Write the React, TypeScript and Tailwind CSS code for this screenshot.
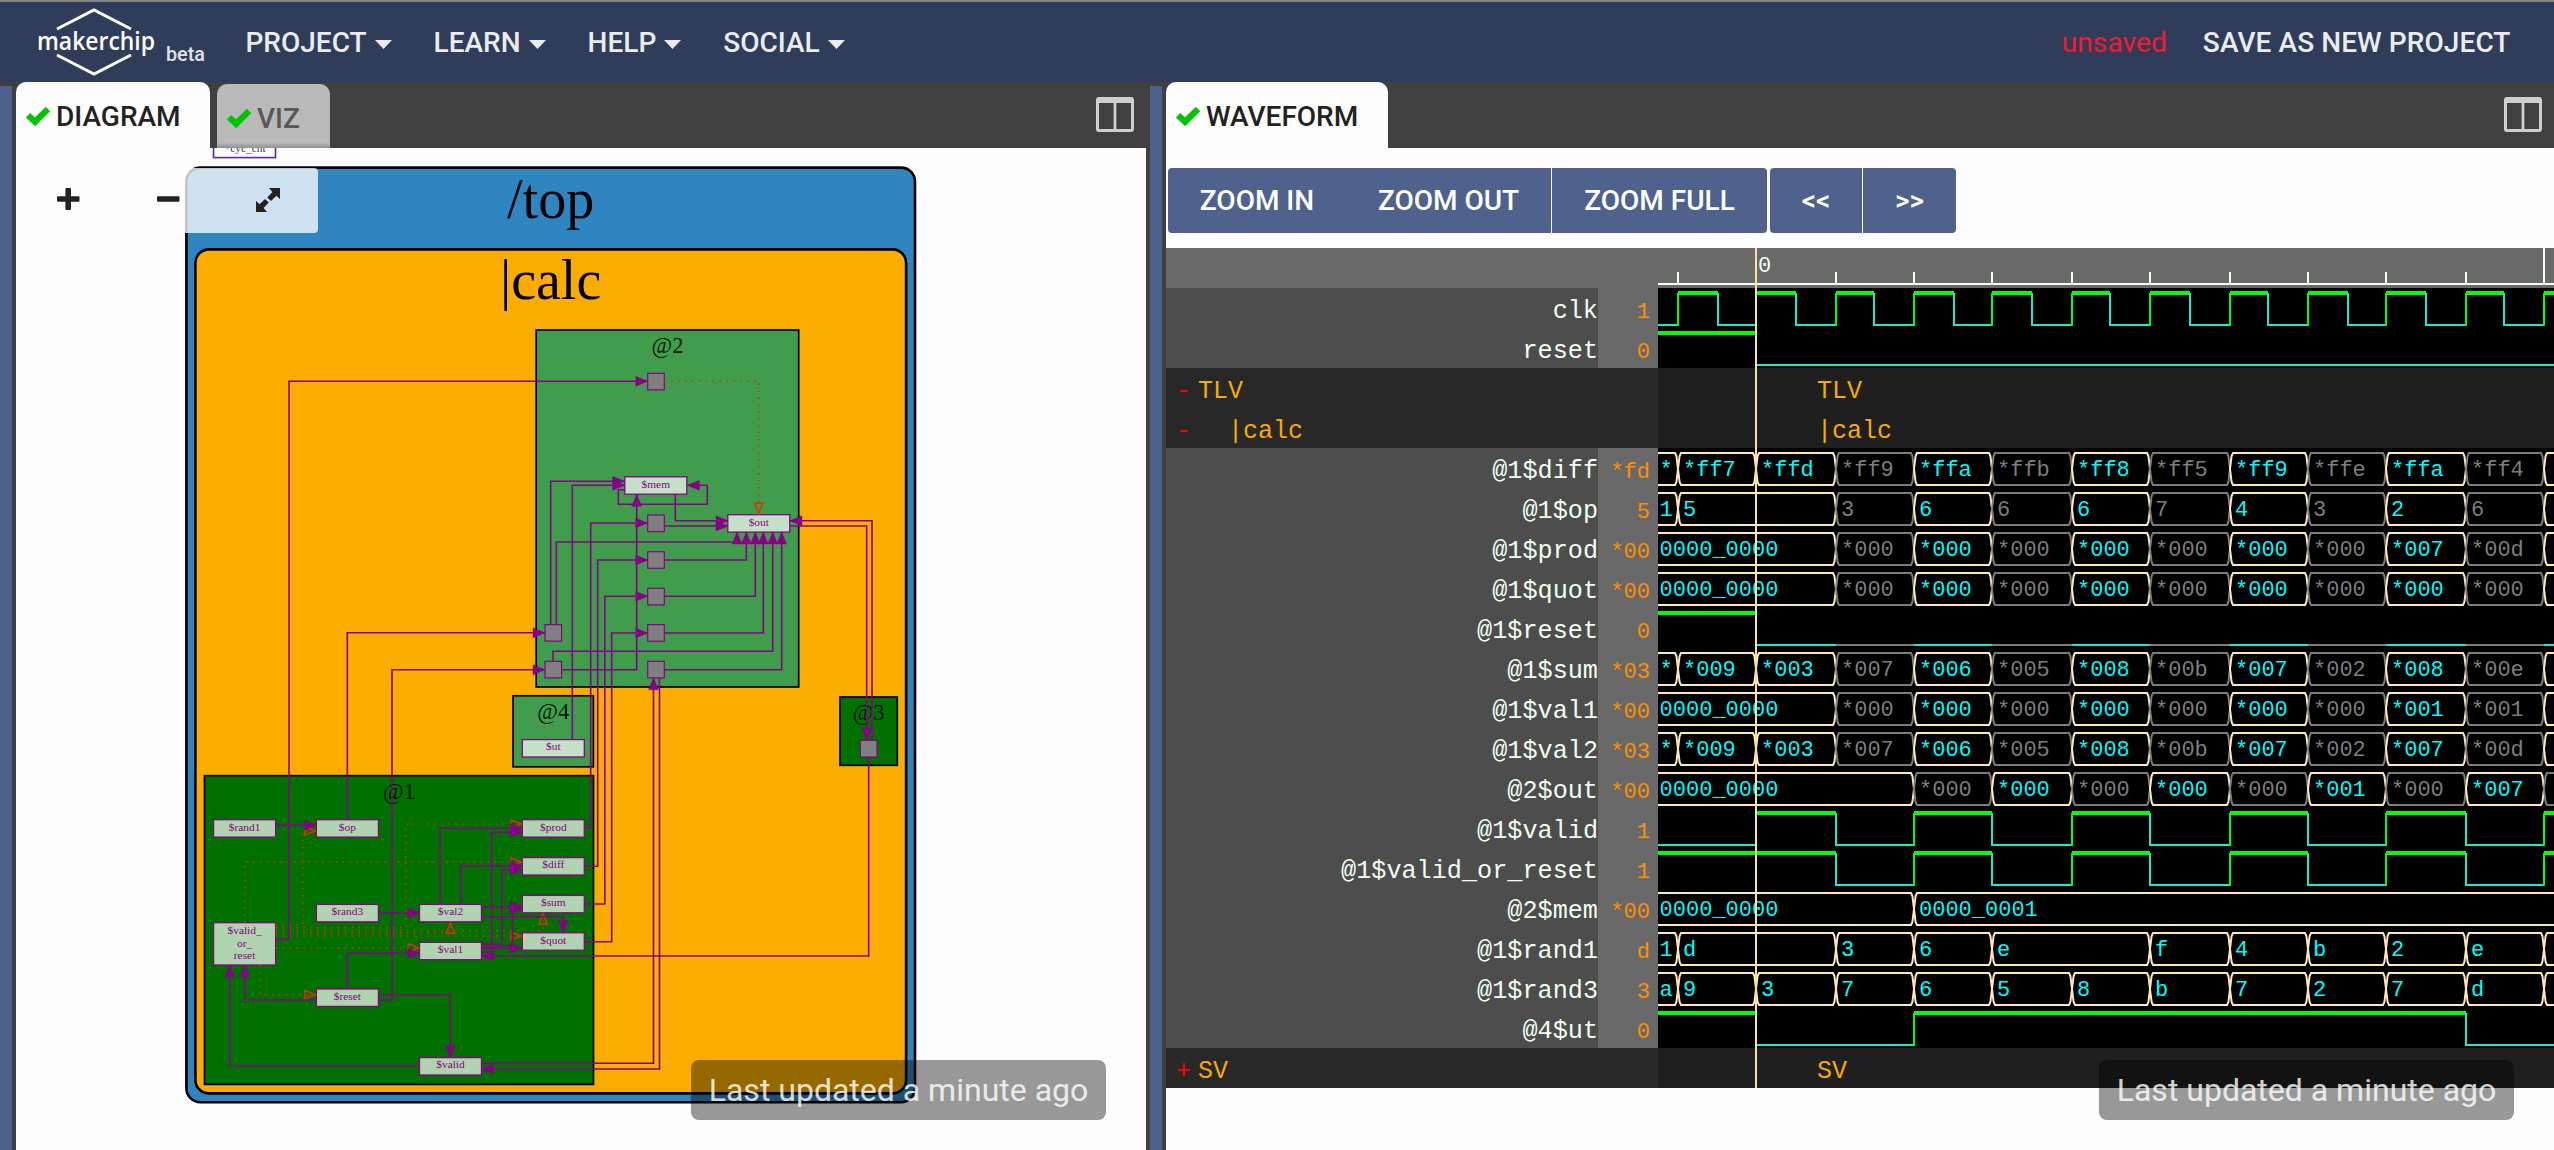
import React from "react";

const SANS = "font-['Roboto',sans-serif]";
const MONO = "font-['Liberation_Mono',monospace]";

/* ---------- header ---------- */

function Logo() {
  return (
    <svg width="216" height="80" viewBox="0 2 216 80" className="shrink-0">
      <g fill="none" stroke="#ffffff" strokeWidth="3">
        <path d="M57 29 L94 10 L131 29" />
        <path d="M57 55 L94 74 L131 55" />
      </g>
      <text x="37" y="49.6" textLength="118" lengthAdjust="spacingAndGlyphs" fontFamily="Open Sans, sans-serif" fontWeight="600" fontSize="25" fill="#ffffff">
        makerchip
      </text>
      <text x="166" y="61" textLength="39" lengthAdjust="spacingAndGlyphs" fontFamily="Roboto, sans-serif" fontSize="20" fill="#e0e3ea">
        beta
      </text>
    </svg>
  );
}

function MenuItem({ label }: { label: string }) {
  return (
    <div className="mr-[42px] flex items-center">
      <span>{label}</span>
      <svg width="17" height="9" viewBox="0 0 17 9" className="ml-2 mt-[2px]">
        <path d="M0 0 H17 L8.5 9 Z" fill="currentColor" />
      </svg>
    </div>
  );
}

function Header() {
  return (
    <header className={`flex h-[82px] shrink-0 items-center border-t-2 border-[#858585] bg-[#303d5a] text-[28px] font-medium leading-8 text-[#eaecef] ${SANS}`}>
      <Logo />
      <nav className="ml-[29.5px] flex items-center pt-[2px]">
        {["PROJECT", "LEARN", "HELP", "SOCIAL"].map((m) => (
          <MenuItem key={m} label={m} />
        ))}
      </nav>
      <div className="ml-auto flex items-center gap-[36px] pr-[43.5px] pt-[2px]">
        <span className="font-normal tracking-[0.1px] text-[#f5182f]">unsaved</span>
        <span className="tracking-[0.08px]">SAVE AS NEW PROJECT</span>
      </div>
    </header>
  );
}

/* ---------- tabs ---------- */

function Check() {
  return (
    <svg width="24" height="19" viewBox="0 0 24 19" className="shrink-0">
      <path d="M0 10.5 L4.2 6.2 L9 10.6 L19.8 0 L24 4.2 L9.2 19 Z" fill="#00c400" stroke="#00c400" strokeLinejoin="round" strokeWidth="0.4" />
    </svg>
  );
}

function SplitIcon() {
  return (
    <svg width="38" height="35" viewBox="0 0 38 35" className="mt-[15px] shrink-0">
      <path fill="#cfcfcf" fillRule="evenodd" d="M3 0 H35 a3 3 0 0 1 3 3 V32 a3 3 0 0 1 -3 3 H3 a3 3 0 0 1 -3 -3 V3 a3 3 0 0 1 3 -3 Z M3 6 V32 H17.6 V6 Z M20.4 6 V32 H35 V6 Z" />
    </svg>
  );
}

function ActiveTab({ label, width }: { label: string; width: string }) {
  return (
    <div className={`flex h-[66px] items-center gap-[6px] rounded-t-[10px] bg-[#fdfdfd] pl-[10px] pt-[3px] text-[28px] font-medium leading-8 text-[#222222] ${width}`}>
      <Check />
      <span>{label}</span>
    </div>
  );
}

function Toast({ className }: { className: string }) {
  return (
    <div className={`absolute flex h-[60px] w-[415px] items-center justify-center rounded-lg bg-black/40 text-[32px] leading-10 text-white/80 ${SANS} ${className}`}>
      Last updated a minute ago
    </div>
  );
}

/* ---------- diagram ---------- */

const PURPLE = "#880088";
const RED = "#dc2f10";

type Pt = [number, number];

function Arrow({ at, dir, hollow }: { at: Pt; dir: "r" | "l" | "u" | "d"; hollow?: boolean }) {
  const [x, y] = at;
  const angle = { r: 0, d: 90, l: 180, u: 270 }[dir];
  return (
    <path
      d={hollow ? "M-11.5 -4.2 L-1 0 L-11.5 4.2 Z" : "M-12 -5 L0 0 L-12 5 Z"}
      transform={`translate(${x} ${y}) rotate(${angle})`}
      fill={hollow ? "none" : PURPLE}
      stroke={hollow ? RED : PURPLE}
      strokeWidth={hollow ? 1.5 : 0.4}
    />
  );
}

function Edge({ d, dotted }: { d: Pt[]; dotted?: boolean }) {
  const n = d.length;
  const [ax, ay] = d[n - 2];
  const [bx, by] = d[n - 1];
  const dir = ay === by ? (bx > ax ? "r" : "l") : by > ay ? "d" : "u";
  return (
    <g>
      <polyline
        points={d.map((p) => p.join(",")).join(" ")}
        fill="none"
        stroke={dotted ? RED : PURPLE}
        strokeWidth="1.6"
        strokeDasharray={dotted ? "1.5 5.4" : undefined}
      />
      <Arrow at={[bx, by]} dir={dir} hollow={dotted} />
    </g>
  );
}

const SOLID: Pt[][] = [
  [[275.7, 939], [289, 939], [289, 381.3], [647.7, 381.3]],
  [[550.7, 624.5], [550.7, 481.3], [624.7, 481.3]],
  [[572.3, 739.7], [572.3, 485.3], [624.7, 485.3]],
  [[624.7, 489.7], [618.3, 489.7], [618.3, 504.3], [707.3, 504.3], [707.3, 485.3], [687.3, 485.3]],
  [[675.3, 494.3], [675.3, 520.7], [728, 520.7]],
  [[664.3, 526], [728, 526]],
  [[561.7, 669.7], [636.7, 669.7], [636.7, 494.3]],
  [[556.3, 624.5], [556.3, 542], [737, 542], [737, 532]],
  [[664.3, 560], [746.3, 560], [746.3, 532]],
  [[664.3, 596.3], [755.3, 596.3], [755.3, 532]],
  [[664.3, 633], [763.3, 633], [763.3, 532]],
  [[553, 661.3], [553, 651.3], [772.7, 651.3], [772.7, 532]],
  [[664.3, 669.7], [781.7, 669.7], [781.7, 532]],
  [[584.7, 828.3], [590.7, 828.3], [590.7, 523], [647.7, 523]],
  [[584.7, 866.3], [597.7, 866.3], [597.7, 560], [647.7, 560]],
  [[584.7, 904], [604.8, 904], [604.8, 596.3], [647.7, 596.3]],
  [[584.7, 941.7], [611.7, 941.7], [611.7, 633], [647.7, 633]],
  [[347.3, 819.7], [347.3, 632.8], [545, 632.8]],
  [[378.7, 1000], [392, 1000], [392, 669.7], [545, 669.7]],
  [[481.3, 1063.2], [653.5, 1063.2], [653.5, 677.7]],
  [[659.5, 677.7], [659.5, 1069], [481.3, 1069]],
  [[790, 526], [866.7, 526], [866.7, 740.3]],
  [[872, 740.3], [872, 520.7], [790, 520.7]],
  [[868.7, 756.7], [868.7, 956], [481.3, 956]],
  [[275.7, 825.3], [316.3, 825.3]],
  [[378.7, 913], [419.7, 913]],
  [[440, 904.3], [440, 828.3], [522.3, 828.3]],
  [[481.3, 952.3], [491.6, 952.3], [491.6, 832.3], [522.3, 832.3]],
  [[460.7, 904.3], [460.7, 866], [522.3, 866]],
  [[481.3, 944], [502, 944], [502, 870], [522.3, 870]],
  [[481.3, 906.7], [522.3, 906.7]],
  [[481.3, 946], [512.3, 946], [512.3, 908.7], [522.3, 908.7]],
  [[481.3, 916.7], [563.3, 916.7], [563.3, 932.7]],
  [[481.3, 948.3], [522.3, 948.3]],
  [[347.3, 989], [347.3, 953.3], [419.7, 953.3]],
  [[316.3, 1000], [244.7, 1000], [244.7, 965]],
  [[378.7, 994.7], [450.3, 994.7], [450.3, 1057.7]],
  [[419.7, 1066], [229.7, 1066], [229.7, 965]],
];

const DOTTED: Pt[][] = [
  [[664.3, 381.3], [758.7, 381.3], [758.7, 514.7]],
  [[275.7, 924.7], [302.7, 924.7], [302.7, 831], [316.3, 831]],
  [[275.7, 927.5], [405.7, 927.5], [405.7, 824], [522.3, 824]],
  [[275.7, 933], [450.3, 933], [450.3, 921.7]],
  [[275.7, 930.5], [543, 930.5], [543, 912.7]],
  [[275.7, 936], [522.3, 936]],
  [[275.7, 948], [419.7, 948]],
  [[244.7, 922.7], [244.7, 862], [522.3, 862]],
  [[260.3, 965], [260.3, 994.7], [316.3, 994.7]],
];

const STAGES = [
  { x: 536.2, y: 330, w: 262.5, h: 357, label: "@2", fill: "#409d4c", base: 352.7 },
  { x: 513, y: 695.8, w: 80.4, h: 71, label: "@4", fill: "#409d4c", base: 718.7 },
  { x: 840, y: 697, w: 57.3, h: 68.3, label: "@3", fill: "#007000", base: 719.7 },
  { x: 204.5, y: 775.7, w: 389, h: 308.7, label: "@1", fill: "#007000", base: 799 },
];

const NODES: { x: number; y: number; label: string }[] = [
  { x: 624.8, y: 476.8, label: "$mem" },
  { x: 727.8, y: 514.7, label: "$out" },
  { x: 522.3, y: 739.6, label: "$ut" },
  { x: 213.6, y: 819.7, label: "$rand1" },
  { x: 316.4, y: 819.7, label: "$op" },
  { x: 522.3, y: 819.7, label: "$prod" },
  { x: 522.3, y: 857.6, label: "$diff" },
  { x: 522.3, y: 895.4, label: "$sum" },
  { x: 522.3, y: 932.8, label: "$quot" },
  { x: 316.4, y: 904.4, label: "$rand3" },
  { x: 419.5, y: 904.4, label: "$val2" },
  { x: 419.5, y: 942.3, label: "$val1" },
  { x: 316.4, y: 989, label: "$reset" },
  { x: 419.5, y: 1057.6, label: "$valid" },
];

const PORTS: Pt[] = [
  [647.7, 373.3], [647.7, 515], [647.7, 551.7], [647.7, 588.3], [647.7, 624.6], [647.7, 661.3],
  [545, 624.6], [545, 661.3], [860.4, 740.4],
];

function Diagram() {
  return (
    <svg width="1130" height="1002" viewBox="16 148 1130 1002" className="block" fontFamily="Liberation Serif, serif" textAnchor="middle">
      <rect x="213.5" y="138" width="62" height="19.6" fill="#fdfdfd" stroke="#5a2ca0" strokeWidth="1.6" />
      <text x="245" y="152.4" fontSize="11.4" fill="#4b1a8b">*cyc_cnt</text>
      <rect x="186.4" y="167.6" width="728.6" height="934.6" rx="14" fill="#2e85c0" stroke="#000" strokeWidth="2.6" />
      <text x="550.6" y="218" fontSize="56">/top</text>
      <rect x="195.4" y="249.4" width="710.7" height="844" rx="13.5" fill="#faad00" stroke="#000" strokeWidth="2.6" />
      <text x="550.6" y="298.5" fontSize="56">|calc</text>
      {STAGES.map((s) => (
        <g key={s.label}>
          <rect x={s.x} y={s.y} width={s.w} height={s.h} fill={s.fill} stroke="#000" strokeWidth="1.7" />
          <text x={s.x + s.w / 2} y={s.base} fontSize="22.4" fillOpacity="0.85">{s.label}</text>
        </g>
      ))}
      {NODES.map((n) => (
        <g key={n.label}>
          <rect x={n.x} y={n.y} width="62" height="17.4" fill="#ffffff" fillOpacity="0.69" stroke={PURPLE} strokeWidth="1.3" />
          <text x={n.x + 31} y={n.y + 10.8} fontSize="11.4" fill={PURPLE}>{n.label}</text>
        </g>
      ))}
      <rect x="213.6" y="922.7" width="62" height="42.3" fill="#ffffff" fillOpacity="0.69" stroke={PURPLE} strokeWidth="1.3" />
      <g fontSize="11.4" fill={PURPLE}>
        <text x="244.6" y="934">$valid_</text>
        <text x="244.6" y="946.8">or_</text>
        <text x="244.6" y="959">reset</text>
      </g>
      {PORTS.map(([x, y]) => (
        <rect key={`${x}-${y}`} x={x} y={y} width="16.6" height="16.6" fill="#808080" stroke={PURPLE} strokeWidth="1.2" />
      ))}
      {DOTTED.map((d, i) => (
        <Edge key={i} d={d} dotted />
      ))}
      {SOLID.map((d, i) => (
        <Edge key={i} d={d} />
      ))}
    </svg>
  );
}

function DiagramControls() {
  return (
    <div className="absolute left-0 top-5 flex h-[65px] w-[302px] items-center rounded-[4px] bg-[#fdfdfd]/[0.78]">
      <svg width="302" height="65" viewBox="16 168 302 65" fill="#222222">
        <rect x="57" y="196.2" width="22.5" height="5.6" rx="1" />
        <rect x="65.4" y="188" width="5.6" height="22" rx="1" />
        <rect x="157" y="196.2" width="22.5" height="5.6" rx="1" />
        <path d="M269 188 H280 V199 L276.4 195.8 L271 201 L267.2 197.4 L272.4 192 Z" />
        <path d="M267 212 H256 V201 L259.6 204.2 L265 199 L268.8 202.6 L263.6 208 Z" />
      </svg>
    </div>
  );
}

function DiagramPane() {
  return (
    <section className={`flex w-[1130px] shrink-0 flex-col ${SANS}`}>
      <div className="flex h-[66px] shrink-0 items-start pr-3">
        <ActiveTab label="DIAGRAM" width="w-[194px]" />
        <div className="ml-[7px] mt-[2px] flex h-16 w-[113px] items-center gap-[6px] rounded-t-[10px] bg-linear-to-b from-[#b9b9b9] from-92% to-[#8f8f8f] pl-[10px] pt-[5px] text-[28px] font-medium leading-8 text-[#575757]">
          <Check />
          <span>VIZ</span>
        </div>
        <div className="grow" />
        <SplitIcon />
      </div>
      <div className="relative grow overflow-hidden bg-[#fdfdfd]">
        <Diagram />
        <DiagramControls />
        <Toast className="bottom-[30px] right-10" />
      </div>
    </section>
  );
}

/* ---------- waveform ---------- */

const START = 1658;
const END = 2560;
const T = [1678, 1756, 1836, 1914, 1992, 2072, 2150, 2230, 2308, 2386, 2466, 2544];
const HALF = [1718, 1796, 1874, 1954, 2032, 2110, 2190, 2268, 2348, 2426, 2504, 2584];
const CREAM = "#ffe8bd";
const GREY = "#7d7d7d";
const HIGH = "#00ff00";
const LOW = "#1de9d2";

/* one bus value: start x, text, stale flag */
type Cell = [number, string, boolean?];
/* one level: start x, level, stale flag */
type Level = [number, 0 | 1, boolean?];

type Row =
  | { kind: "bus"; name: string; value: string; cells: Cell[] }
  | { kind: "bit"; name: string; value: string; levels: Level[] }
  | { kind: "group"; name: string; mark: string; nested?: boolean };

/* values that begin at T[from], every other one stale */
function run(from: number, values: string[]): Cell[] {
  return values.map((v, i) => [T[from + i], v, i % 2 === 0]);
}

const fresh = (from: number, values: string[]): Cell[] => values.map((v, i) => [T[from + i], v]);

const clk: Level[] = [[START, 0]];
T.forEach((t, i) => clk.push([t, 1], [HALF[i], 0]));

const toggles: Level[] = T.slice(2).map((t, i) => [t, i % 2 === 0 ? 0 : 1]);

/* op, diff and the other @1 results end with a fresh value, whose text lies past the right edge */
const ROWS: Row[] = [
  { kind: "bit", name: "clk", value: "1", levels: clk },
  { kind: "bit", name: "reset", value: "0", levels: [[START, 1], [T[1], 0]] },
  { kind: "group", name: "TLV", mark: "-" },
  { kind: "group", name: "|calc", mark: "-", nested: true },
  { kind: "bus", name: "@1$diff", value: "*fd", cells: [[START, "*"], [T[0], "*ff7"], [T[1], "*ffd"], ...run(2, ["*ff9", "*ffa", "*ffb", "*ff8", "*ff5", "*ff9", "*ffe", "*ffa", "*ff4", ""])] },
  { kind: "bus", name: "@1$op", value: "5", cells: [[START, "1"], [T[0], "5"], ...run(2, ["3", "6", "6", "6", "7", "4", "3", "2", "6", ""])] },
  { kind: "bus", name: "@1$prod", value: "*00", cells: [[START, "0000_0000"], ...run(2, ["*000", "*000", "*000", "*000", "*000", "*000", "*000", "*007", "*00d", ""])] },
  { kind: "bus", name: "@1$quot", value: "*00", cells: [[START, "0000_0000"], ...run(2, ["*000", "*000", "*000", "*000", "*000", "*000", "*000", "*000", "*000", ""])] },
  { kind: "bit", name: "@1$reset", value: "0", levels: [[START, 1], [T[1], 0], ...T.slice(2).map((t, i): Level => [t, 0, i % 2 === 0])] },
  { kind: "bus", name: "@1$sum", value: "*03", cells: [[START, "*"], [T[0], "*009"], [T[1], "*003"], ...run(2, ["*007", "*006", "*005", "*008", "*00b", "*007", "*002", "*008", "*00e", ""])] },
  { kind: "bus", name: "@1$val1", value: "*00", cells: [[START, "0000_0000"], ...run(2, ["*000", "*000", "*000", "*000", "*000", "*000", "*000", "*001", "*001", ""])] },
  { kind: "bus", name: "@1$val2", value: "*03", cells: [[START, "*"], [T[0], "*009"], [T[1], "*003"], ...run(2, ["*007", "*006", "*005", "*008", "*00b", "*007", "*002", "*007", "*00d", ""])] },
  { kind: "bus", name: "@2$out", value: "*00", cells: [[START, "0000_0000"], ...run(3, ["*000", "*000", "*000", "*000", "*000", "*001", "*000", "*007", ""])] },
  { kind: "bit", name: "@1$valid", value: "1", levels: [[START, 0], [T[1], 1], ...toggles] },
  { kind: "bit", name: "@1$valid_or_reset", value: "1", levels: [[START, 1], ...toggles] },
  { kind: "bus", name: "@2$mem", value: "*00", cells: [[START, "0000_0000"], [T[3], "0000_0001"]] },
  { kind: "bus", name: "@1$rand1", value: "d", cells: [[START, "1"], [T[0], "d"], [T[2], "3"], [T[3], "6"], [T[4], "e"], ...fresh(6, ["f", "4", "b", "2", "e", ""])] },
  { kind: "bus", name: "@1$rand3", value: "3", cells: [[START, "a"], ...fresh(0, ["9", "3", "7", "6", "5", "8", "b", "7", "2", "7", "d", ""])] },
  { kind: "bit", name: "@4$ut", value: "0", levels: [[START, 1], [T[1], 0], [T[3], 1], [T[10], 0]] },
  { kind: "group", name: "SV", mark: "+" },
];

function BusWave({ cells }: { cells: Cell[] }) {
  return (
    <>
      {cells.map(([x, text, stale], i) => {
        const open = i === 0;
        const last = i === cells.length - 1;
        const e = last ? END : cells[i + 1][0];
        const l = open ? `M${x} 37 M${x} 5` : `M${x} 21 L${x + 1.6} 8 L${x + 3} 5`;
        const r = last ? `H${e} M${e} 37` : `H${e - 3} L${e - 1.6} 8 L${e} 21 L${e - 1.6} 34 L${e - 3} 37`;
        const back = open ? `H${x}` : `H${x + 3} L${x + 1.6} 34 L${x} 21`;
        return (
          <g key={x}>
            <path d={`${l} ${r} ${back}`} fill="none" stroke={stale ? GREY : CREAM} strokeWidth="2" />
            <text x={open ? x + 1.6 : x + 5} y="28" fill={stale ? GREY : "#00fafa"}>{text}</text>
          </g>
        );
      })}
    </>
  );
}

function BitWave({ levels }: { levels: Level[] }) {
  return (
    <>
      {levels.map(([x, v, stale], i) => {
        const e = i === levels.length - 1 ? END : levels[i + 1][0];
        const changed = i > 0 && levels[i - 1][1] !== v;
        const color = v ? HIGH : stale ? GREY : LOW;
        return (
          <g key={x} stroke={color} strokeWidth="2">
            {changed && <path d={`M${x} 5 V38`} />}
            <path d={v ? `M${x} 5 H${e}` : `M${x} 37 H${e}`} strokeWidth={v ? 4 : 2} />
          </g>
        );
      })}
    </>
  );
}

function WaveRow({ row }: { row: Row }) {
  if (row.kind === "group") {
    return (
      <div className="flex h-10 text-[25px] leading-[48px] text-[#f9aa00]">
        <div className="flex h-10 w-[492px] shrink-0 bg-[#282828] pl-[10px]">
          <span className="w-[22px] shrink-0 text-[#ff0000]">{row.mark}</span>
          <span className={row.nested ? "pl-[30px]" : ""}>{row.name}</span>
        </div>
        <div className="h-10 grow bg-[#1f1f1f] pl-[159px]">{row.name}</div>
      </div>
    );
  }
  return (
    <div className="flex h-10">
      <div className="w-[432px] shrink-0 bg-[#4d4d4d] text-right text-[25.2px] leading-[48px] text-[#f0fff0]">{row.name}</div>
      <div className="w-[60px] shrink-0 bg-[#696969] pr-2 text-right text-[22px] leading-[50px] text-[#ff9000]">{row.value}</div>
      <svg width="896" height="40" viewBox="1658 0 896 40" fontSize="22" className="block shrink-0 bg-black">
        {row.kind === "bus" ? <BusWave cells={row.cells} /> : <BitWave levels={row.levels} />}
      </svg>
    </div>
  );
}

function Ruler() {
  return (
    <div className="flex h-10 bg-[#696969]">
      <div className="w-[492px] shrink-0" />
      <svg width="896" height="40" viewBox="1658 0 896 40" fontSize="22" className="block shrink-0">
        <g stroke="#f0fff0" strokeWidth="2">
          <path d={`M${START} 36 H${END}`} />
          {T.map((t, i) => (i === 1 ? null : <path key={t} d={i === 11 ? `M${t} 0 V36` : `M${t} 24 V36`} />))}
        </g>
        <text x="1758" y="23.5" fill="#f0fff0">0</text>
      </svg>
    </div>
  );
}

function Toolbar() {
  const button = "flex h-[65px] items-center justify-center bg-[#4f628e]";
  return (
    <div className={`flex pl-[2px] text-[28px] font-medium leading-8 text-white ${SANS}`}>
      <div className={`${button} w-[178px] rounded-l-[4px]`}>ZOOM IN</div>
      <div className={`${button} w-[205px]`}>ZOOM OUT</div>
      <div className={`${button} ml-px w-[215px] rounded-r-[4px]`}>ZOOM FULL</div>
      <div className={`${button} ml-[3px] w-[92px] rounded-l-[4px]`}>&lt;&lt;</div>
      <div className={`${button} ml-px w-[93px] rounded-r-[4px]`}>&gt;&gt;</div>
    </div>
  );
}

function WaveformPane() {
  return (
    <section className={`flex w-[1388px] shrink-0 flex-col ${SANS}`}>
      <div className="flex h-[66px] shrink-0 items-start justify-between pr-3">
        <ActiveTab label="WAVEFORM" width="w-[222px]" />
        <SplitIcon />
      </div>
      <div className="relative grow overflow-hidden bg-[#fdfdfd] pt-5">
        <Toolbar />
        <div className={`relative mt-[15px] h-[840px] overflow-hidden whitespace-pre ${MONO}`}>
          <Ruler />
          {ROWS.map((row) => (
            <WaveRow key={row.name} row={row} />
          ))}
          <div className="absolute bottom-0 left-[589px] top-0 w-[2px] bg-[#f8e0a8]" />
        </div>
        <Toast className="bottom-[30px] right-10" />
      </div>
    </section>
  );
}

export default function App() {
  return (
    <div className="flex h-[1150px] w-[2554px] flex-col overflow-hidden bg-[#404040]">
      <Header />
      <main className="flex grow">
        <div className="mr-1 mt-1 w-3 shrink-0 bg-[#4d618c]" />
        <DiagramPane />
        <div className="mx-1 mt-1 w-3 shrink-0 bg-[#4d618c]" />
        <WaveformPane />
      </main>
    </div>
  );
}
